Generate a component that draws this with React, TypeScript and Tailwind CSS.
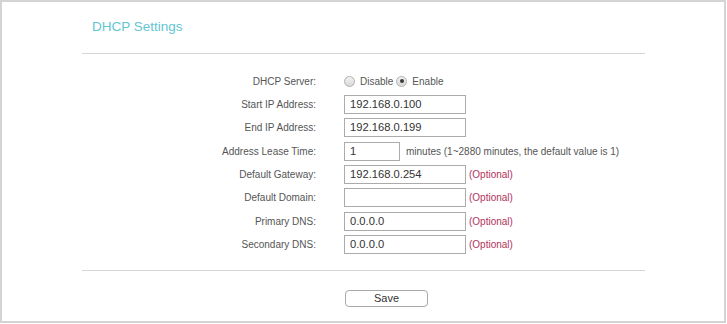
import React from "react";

function Radio({ checked }: { checked?: boolean }) {
  return (
    <span className="inline-flex items-center justify-center w-[11px] h-[11px] rounded-full border border-[#b0b0b0] bg-[linear-gradient(#f2f2f2,#d8d8d8)]">
      {checked && <span className="w-[4px] h-[4px] rounded-full bg-[#3a3a3a]" />}
    </span>
  );
}

function Row({ label, children }: { label: string; children: React.ReactNode }) {
  return (
    <div className="flex items-center h-[23.3px]">
      <div className="w-[235px] text-right pr-px text-[10px] text-[#555]">{label}</div>
      <div className="ml-[27px] flex items-center">{children}</div>
    </div>
  );
}

function Input({ value, w = "w-[122px]" }: { value: string; w?: string }) {
  return (
    <div className={`${w} h-[19px] border border-[#ababab] bg-white flex items-center pl-[5px] text-[11.2px] text-[#333]`}>
      {value}
    </div>
  );
}

function Optional() {
  return <span className="ml-[3px] text-[10px] text-[#b0335c]">(Optional)</span>;
}

export default function App() {
  return (
    <div className="w-[727px] h-[324px] bg-white" style={{ fontFamily: '"Liberation Sans", Arial, sans-serif' }}>
      <div className="w-[726px] h-[323px] border-2 border-[#d4d4d4] pl-[80px]">
        <div className="w-[563px]">
          <div className="pt-[17px] pl-[10px] h-[33px] text-[13.5px] leading-[16px] text-[#62c6d3]">DHCP Settings</div>
          <div className="mt-[18px] h-px bg-[#d6d6d6]" />
          <div className="mt-[15.6px] flex flex-col">
            <Row label="DHCP Server:">
              <div className="flex items-center text-[10px] text-[#555]">
                <Radio />
                <span className="ml-[5px]">Disable</span>
                <span className="ml-[3px] flex"><Radio checked /></span>
                <span className="ml-[5px]">Enable</span>
              </div>
            </Row>
            <Row label="Start IP Address:"><Input value="192.168.0.100" /></Row>
            <Row label="End IP Address:"><Input value="192.168.0.199" /></Row>
            <Row label="Address Lease Time:">
              <Input value="1" w="w-[56px]" />
              <span className="ml-[6px] text-[10px] text-[#555]">minutes (1~2880 minutes, the default value is 1)</span>
            </Row>
            <Row label="Default Gateway:"><Input value="192.168.0.254" /><Optional /></Row>
            <Row label="Default Domain:"><Input value="" /><Optional /></Row>
            <Row label="Primary DNS:"><Input value="0.0.0.0" /><Optional /></Row>
            <Row label="Secondary DNS:"><Input value="0.0.0.0" /><Optional /></Row>
          </div>
          <div className="mt-[14.4px] h-px bg-[#d6d6d6]" />
          <div className="mt-[14px] pl-[263px]">
            <button className="w-[83px] h-[17px] rounded-[4px] border border-[#a8a8a8] bg-white text-[11px] leading-[15px] text-[#333]">Save</button>
          </div>
        </div>
      </div>
    </div>
  );
}
